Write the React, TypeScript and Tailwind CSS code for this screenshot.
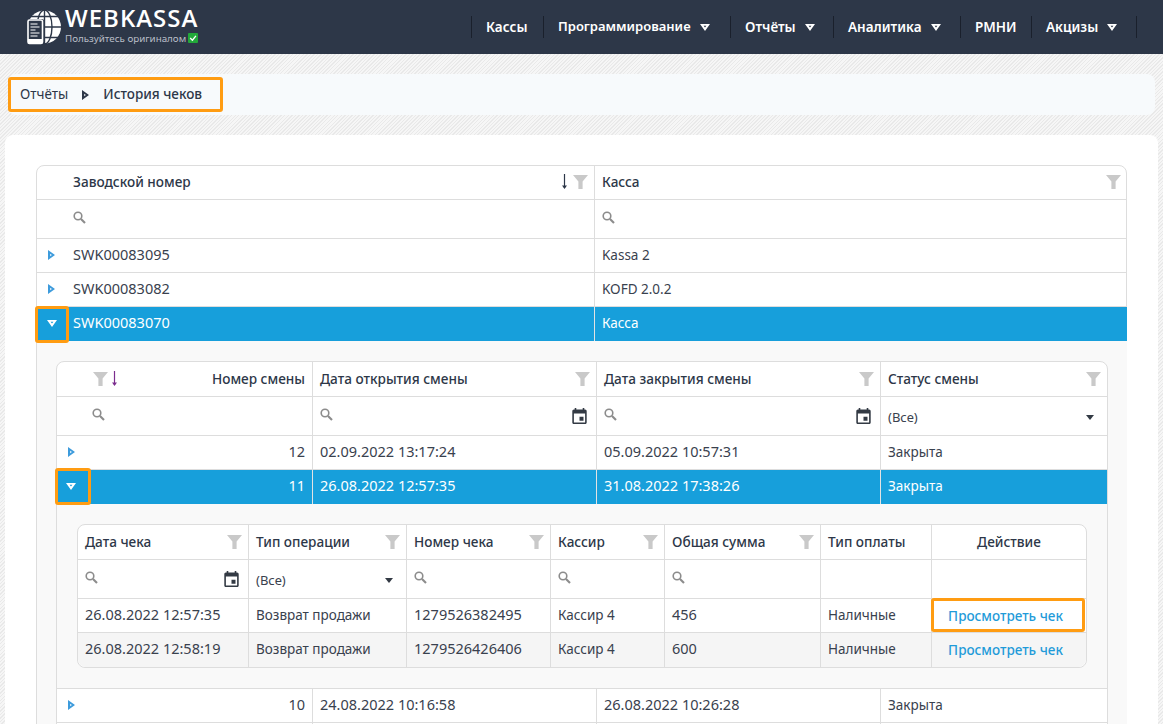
import React from 'react';

const FONT = "font-['Noto_Sans','Open_Sans',sans-serif]";

const Funnel = ({ className = '' }: { className?: string }) => (
  <svg viewBox="0 0 15 14" className={`w-[15px] h-[14px] shrink-0 ${className}`}>
    <path d="M0 0h15L9.600 6.400V14H5.400V6.400z" fill="#c9c9c9" />
  </svg>
);

const Lens = () => (
  <svg viewBox="0 0 13 13" className="w-[13px] h-[13px] shrink-0" fill="none" stroke="#8c8c8c">
    <circle cx="5" cy="5" r="3.800" strokeWidth="1.600" />
    <path d="M8 8l4 4" strokeWidth="2.200" />
  </svg>
);

const Calendar = () => (
  <svg viewBox="3 1 18 20" className="w-[15px] h-[16px] shrink-0" fill="#333a44">
    <path d="M17 12h-5v5h5zM16 1v2H8V1H6v2H5c-1.100 0-2 .9-2 2v14c0 1.100.9 2 2 2h14c1.100 0 2-.9 2-2V5c0-1.100-.9-2-2-2h-1V1zm3 18H5V8h14z" />
  </svg>
);

const ArrowRight = ({ color = '#3d9bdc' }: { color?: string }) => (
  <svg viewBox="0 0 7 10" className="w-[7px] h-[10px] inline-block">
    <path fillRule="evenodd" d="M0 0l7 5-7 5zM2.200 3.800v2.400L3.900 5z" fill={color} />
  </svg>
);

const ArrowDown = ({ color = '#ffffff' }: { color?: string }) => (
  <svg viewBox="0 0 10 7" className="w-[10px] h-[7px] inline-block">
    <path fillRule="evenodd" d="M0 0h10L5 7zM3.600 1.800L5 3.500l1.400-1.700z" fill={color} />
  </svg>
);

const SortDown = ({ color }: { color: string }) => (
  <svg viewBox="0 0 7 16" className="w-[7px] h-[16px] shrink-0" fill="none" stroke={color}>
    <path d="M3.500 0v14" strokeWidth="1.200" />
    <path d="M1 11.500h5L3.500 15z" fill={color} stroke="none" />
  </svg>
);

const Caret = () => (
  <svg viewBox="0 0 8 5" className="w-2 h-[5px] shrink-0">
    <path d="M0 0h8L4 5z" fill="#333a44" />
  </svg>
);

const Logo = () => (
  <svg viewBox="0 0 34 35" className="w-[34px] h-[35px] shrink-0">
    <circle cx="17.500" cy="17" r="16.500" fill="#fff" />
    <g fill="none" stroke="#2d3748" strokeWidth="1.400">
      <ellipse cx="17.500" cy="17" rx="7.500" ry="17" />
      <path d="M17.500 0v34M0 6.500h34M0 17h34M0 27.500h34" />
    </g>
    <rect x="0" y="9" width="17" height="26" rx="2" fill="#2d3748" />
    <rect x="1" y="10" width="14.500" height="23.500" rx="1.500" fill="none" stroke="#fff" strokeWidth="1.600" />
    <path d="M3.500 14h7M3.500 17h9M3.500 20h5M3.500 23h9M3.500 26h7" stroke="#fff" strokeWidth="1.100" />
    <path d="M1 29h14.500v3a1.500 1.500 0 0 1-1.500 1.500H2.500A1.500 1.500 0 0 1 1 32z" fill="#fff" />
  </svg>
);

const CheckBadge = () => (
  <svg viewBox="0 0 10 10" className="w-[10px] h-[10px] shrink-0">
    <rect width="10" height="10" rx="1" fill="#22a83a" />
    <path d="M2.200 5l2.200 2.200 3.500-4.400" fill="none" stroke="#fff" strokeWidth="1.300" />
  </svg>
);

const navItems = [
  { label: 'Кассы', w: 'w-[72px]', size: 'text-[13.500px]' },
  { label: 'Программирование', menu: true, w: 'w-[187px]', size: 'text-[13px]' },
  { label: 'Отчёты', menu: true, w: 'w-[103px]', size: 'text-[13.500px]' },
  { label: 'Аналитика', menu: true, w: 'w-[127px]', size: 'text-[13.500px]' },
  { label: 'РМНИ', w: 'w-[71px]', size: 'text-[13.500px]' },
  { label: 'Акцизы', menu: true, w: 'w-[105px]', size: 'text-[13.500px]' },
];

const Header = () => (
  <header className="h-[54px] bg-[#2d3748] flex items-center pl-[27px] pr-[26px]">
    <Logo />
    <div className="ml-[4px] flex flex-col">
      <span className="text-[24px] leading-[24px] font-semibold text-white font-['Open_Sans',sans-serif] tracking-[1px] -mt-[5px]">WEBKASSA</span>
      <span className="flex items-center gap-[2px] text-[9.800px] leading-[11px] text-[#b9bec7] mt-[3px]">
        Пользуйтесь оригиналом <CheckBadge />
      </span>
    </div>
    <nav className="ml-auto flex items-center h-[22px] border-r border-[#1a202c]">
      {navItems.map((item) => (
        <div key={item.label} className={`h-full flex items-center gap-[9px] pl-[14px] border-l border-[#1a202c] ${item.w}`}>
          <span className={`font-semibold text-white whitespace-nowrap ${item.size}`}>{item.label}</span>
          {item.menu && <ArrowDown />}
        </div>
      ))}
    </nav>
  </header>
);

const Breadcrumb = () => (
  <div className="mt-[20px] mx-2 h-[41px] bg-[#f7fafc] rounded-lg pt-[3px]">
    <div className="h-[35px] w-[215px] border-[3px] border-[#ff9c12] rounded-[3px] flex items-center pl-[9px] text-[13.500px] text-[#2d3748]">
      <span>Отчёты</span>
      <span className="ml-[14px] flex"><ArrowRight color="#2d3748" /></span>
      <span className="ml-[14px] font-medium">История чеков</span>
    </div>
  </div>
);

const th = 'h-[34px] border-b border-r border-[#dddddd] px-[7px] pb-[1px] text-[13.600px] font-medium text-[#2d3748] text-left last:border-r-0 whitespace-nowrap';
const fc = 'h-[39px] border-b border-r border-[#dddddd] px-[7px] align-middle last:border-r-0';
const td = 'h-[34px] border-b border-r border-[#dddddd] px-[7px] text-[#39414e] last:border-r-0 whitespace-nowrap';
const sel = 'h-[34px] bg-[#179fdb] border-r border-[#e3e3e3] px-[7px] text-white last:border-r-0 whitespace-nowrap';
// digits run wider than the Cyrillic in the original font
const num = 'text-[14.500px] pb-[2px]';
const txt = 'text-[13.500px] pb-[1px]';

const HeadCell = ({ label }: { label: string }) => (
  <th className={th}>
    <div className="flex items-center justify-between">
      <span>{label}</span>
      <Funnel className="-mr-[1px]" />
    </div>
  </th>
);

const SearchCell = ({ calendar }: { calendar?: boolean }) => (
  <td className={fc}>
    <div className="flex items-center justify-between -mt-[4px]">
      <Lens />
      {calendar && <span className="mr-[2px] mt-[3px]"><Calendar /></span>}
    </div>
  </td>
);

const SelectCell = () => (
  <td className={fc}>
    <div className="flex items-center justify-between pr-[6px] text-[13px] text-[#39414e] mt-[3px]">
      <span>(Все)</span>
      <Caret />
    </div>
  </td>
);

const ExpandCell = () => (
  <td className="h-[34px] text-center p-0 pb-[2px] border-b border-[#dddddd]">
    <span className="flex justify-center"><ArrowRight /></span>
  </td>
);

const receipts = [
  { date: '26.08.2022 12:57:35', number: '1279526382495', sum: '456' },
  { date: '26.08.2022 12:58:19', number: '1279526426406', sum: '600' },
];

const ReceiptsTable = () => (
  <div className="border border-[#dddddd] rounded-lg bg-white">
    <table className="w-full table-fixed border-separate border-spacing-0 [&_th]:pb-0 [&_th]:pt-[1px]">
      <colgroup>
        <col className="w-[171px]" />
        <col className="w-[158px]" />
        <col className="w-[144px]" />
        <col className="w-[114px]" />
        <col className="w-[156px]" />
        <col className="w-[111px]" />
        <col className="w-[154px]" />
      </colgroup>
      <thead>
        <tr>
          <HeadCell label="Дата чека" />
          <HeadCell label="Тип операции" />
          <HeadCell label="Номер чека" />
          <HeadCell label="Кассир" />
          <HeadCell label="Общая сумма" />
          <th className={`${th} h-[35px]`}>Тип оплаты</th>
          <th className={`${th} h-[35px]`}>
            <div className="flex justify-center">Действие</div>
          </th>
        </tr>
        <tr>
          <SearchCell calendar />
          <SelectCell />
          <SearchCell />
          <SearchCell />
          <SearchCell />
          <td className={fc} />
          <td className={fc} />
        </tr>
      </thead>
      <tbody>
        {receipts.map((r, i) => {
          const last = i === receipts.length - 1;
          const base = last
            ? 'h-[34px] bg-[#f5f5f5] border-r border-[#dddddd] px-[7px] text-[#39414e] whitespace-nowrap'
            : td;
          return (
            <tr key={r.number}>
              <td className={`${base} ${num} ${last ? 'rounded-bl-lg' : ''}`}>{r.date}</td>
              <td className={`${base} ${txt}`}>Возврат продажи</td>
              <td className={`${base} ${num}`}>{r.number}</td>
              <td className={`${base} ${txt}`}>Кассир 4</td>
              <td className={`${base} ${num}`}>{r.sum}</td>
              <td className={`${base} ${txt}`}>Наличные</td>
              <td className={`${base} relative border-r-0 text-center pr-[14px] pb-[2px] ${last ? 'rounded-br-lg' : ''}`}>
                <span className="text-[13.500px] font-medium text-[#1f9bd9]">Просмотреть чек</span>
                {!last && <span className="absolute -left-px right-px -top-[1px] bottom-0 border-[3px] border-[#ff9c12] rounded-[3px]" />}
              </td>
            </tr>
          );
        })}
      </tbody>
    </table>
  </div>
);

const ShiftsTable = () => (
  <div className="border border-[#dddddd] rounded-lg bg-white">
    <table className="w-full table-fixed border-separate border-spacing-0 [&_th]:pb-0 [&_th]:pt-[1px]">
      <colgroup>
        <col className="w-[28px]" />
        <col className="w-[228px]" />
        <col className="w-[284px]" />
        <col className="w-[284px]" />
        <col className="w-[226px]" />
      </colgroup>
      <thead>
        <tr>
          <th className="h-[35px] border-b border-[#dddddd]" />
          <th className={`${th} h-[35px]`}>
            <div className="flex items-center">
              <span className="ml-px"><Funnel /></span>
              <span className="ml-[3px]"><SortDown color="#7b2d8e" /></span>
              <span className="ml-auto">Номер смены</span>
            </div>
          </th>
          <HeadCell label="Дата открытия смены" />
          <HeadCell label="Дата закрытия смены" />
          <HeadCell label="Статус смены" />
        </tr>
        <tr>
          <td className="h-[39px] border-b border-[#dddddd]" />
          <SearchCell />
          <SearchCell calendar />
          <SearchCell calendar />
          <SelectCell />
        </tr>
      </thead>
      <tbody>
        <tr>
          <ExpandCell />
          <td className={`${td} ${num} text-right`}>12</td>
          <td className={`${td} ${num}`}>02.09.2022 13:17:24</td>
          <td className={`${td} ${num}`}>05.09.2022 10:57:31</td>
          <td className={`${td} ${txt}`}>Закрыта</td>
        </tr>
        <tr>
          <td className="h-[34px] bg-[#179fdb] p-0 pb-[2px] relative">
            <span className="flex justify-center"><ArrowDown /></span>
            <span className="absolute -left-[2px] -right-[6px] -top-[2px] -bottom-[1px] border-[3px] border-[#ff9c12] rounded-[3px]" />
          </td>
          <td className={`${sel} ${num} text-right`}>11</td>
          <td className={`${sel} ${num}`}>26.08.2022 12:57:35</td>
          <td className={`${sel} ${num}`}>31.08.2022 17:38:26</td>
          <td className={`${sel} ${txt}`}>Закрыта</td>
        </tr>
        <tr>
          <td colSpan={5} className="bg-[#f9f9f9] border-b border-[#dddddd] p-5">
            <ReceiptsTable />
          </td>
        </tr>
        <tr>
          <ExpandCell />
          <td className={`${td} ${num} text-right`}>10</td>
          <td className={`${td} ${num}`}>24.08.2022 10:16:58</td>
          <td className={`${td} ${num}`}>26.08.2022 10:26:28</td>
          <td className={`${td} ${txt}`}>Закрыта</td>
        </tr>
        <tr>
          <td className="h-[34px]" />
          <td className={td} />
          <td className={td} />
          <td className={td} />
          <td className={td} />
        </tr>
      </tbody>
    </table>
  </div>
);

const RegistersTable = () => (
  <div className="border border-[#dddddd] rounded-lg">
    <table className="w-full table-fixed border-separate border-spacing-0">
      <colgroup>
        <col className="w-[29px]" />
        <col className="w-[529px]" />
        <col className="w-[532px]" />
      </colgroup>
      <thead>
        <tr>
          <th className="h-[34px] border-b border-[#dddddd]" />
          <th className={th}>
            <div className="flex items-center justify-between">
              <span>Заводской номер</span>
              <span className="flex items-center gap-[5px] -mr-[1px]">
                <SortDown color="#2d3748" />
                <Funnel />
              </span>
            </div>
          </th>
          <HeadCell label="Касса" />
        </tr>
        <tr>
          <td className="h-[39px] border-b border-[#dddddd]" />
          <SearchCell />
          <SearchCell />
        </tr>
      </thead>
      <tbody>
        <tr>
          <ExpandCell />
          <td className={`${td} ${num}`}>SWK00083095</td>
          <td className={`${td} ${txt}`}>Kassa 2</td>
        </tr>
        <tr>
          <ExpandCell />
          <td className={`${td} ${num}`}>SWK00083082</td>
          <td className={`${td} ${txt}`}>KOFD 2.0.2</td>
        </tr>
        <tr>
          <td className="h-[34px] bg-[#179fdb] p-0 pb-[2px] relative">
            <span className="flex justify-center"><ArrowDown /></span>
            <span className="absolute -left-[2px] -right-[3px] -top-[1px] -bottom-[2px] border-[3px] border-[#ff9c12] rounded-[3px]" />
          </td>
          <td className={`${sel} ${num}`}>SWK00083070</td>
          <td className={`${sel} ${txt}`}>Касса</td>
        </tr>
        <tr>
          <td colSpan={3} className="bg-[#f9f9f9] pt-5 px-[19px] pb-5">
            <ShiftsTable />
          </td>
        </tr>
      </tbody>
    </table>
  </div>
);

export default function App() {
  return (
    <div className={`h-screen overflow-hidden bg-[repeating-linear-gradient(135deg,#e9e9e9_0px,#e9e9e9_1px,#f6f6f6_1px,#f6f6f6_2.500px)] ${FONT}`}>
      <Header />
      <Breadcrumb />
      <main className="mt-[20px] mx-[5px] bg-white rounded-lg px-[31px] pt-[30px] pb-8">
        <RegistersTable />
      </main>
    </div>
  );
}
